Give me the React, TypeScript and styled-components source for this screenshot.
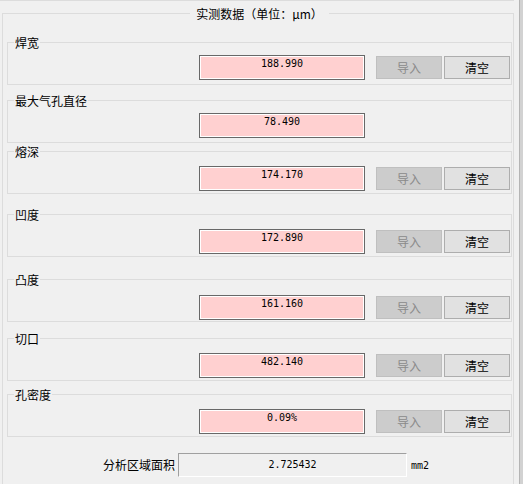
import React from "react";
import styled, { createGlobalStyle } from "styled-components";

//#region Styles
const GlobalStyle = createGlobalStyle`
  html, body {
    margin: 0;
    padding: 0;
    background: #f0f0f0;
  }
  body {
    font-family: "Noto Sans CJK SC", "Noto Sans", sans-serif;
    font-size: 12px;
    color: #000;
  }
`;

const Window = styled.div`
  width: 523px;
  height: 484px;
  overflow: hidden;
  display: flex;
  justify-content: space-between;
  background: #f0f0f0;
`;

const Panel = styled.div`
  width: 514px;
  box-sizing: border-box;
  border-top: 1px solid #dcdcdc;
  padding: 6px 0 0 2px;
`;

const ScrollEdge = styled.div`
  width: 3px;
  border-left: 1px solid #b4b4b4;
  background: #d2d2d2;
`;

const OuterGroup = styled.fieldset`
  margin: 0;
  min-width: 0;
  min-height: 520px;
  padding: 16px 1px 0 4px;
  border: 1px solid #dcdcdc;
`;

const OuterTitle = styled.legend`
  margin: 0 auto;
  padding: 0 6px;
  font-size: 12px;
  line-height: 13px;
`;

const Group = styled.fieldset<{ $gap: number }>`
  margin: ${(p) => p.$gap}px 0 0;
  min-width: 0;
  padding: 0;
  border: 1px solid #dcdcdc;
`;

const GroupTitle = styled.legend`
  margin-left: 6px;
  padding: 0 1px;
  font-size: 12px;
  line-height: 13px;
`;

const Row = styled.div<{ $offset: number }>`
  height: 35px;
  box-sizing: border-box;
  padding: ${(p) => p.$offset - 7}px 0 0 191px;
  display: flex;
  align-items: flex-start;
`;

const Controls = styled.div`
  height: 25px;
  display: flex;
  align-items: center;
  gap: 2px;
`;

const ValueBox = styled.div`
  width: 166px;
  height: 25px;
  box-sizing: border-box;
  margin-right: 11px;
  padding-top: 1px;
  border: 1px solid #686868;
  box-shadow: inset 0 0 0 1px #fff;
  background: #ffd0d0;
  font-family: "DejaVu Sans Mono", "Liberation Mono", monospace;
  font-size: 10px;
  line-height: 13px;
  text-align: center;
`;

const Button = styled.button`
  width: 66px;
  height: 23px;
  margin: 0;
  padding: 0;
  box-sizing: border-box;
  border: 1px solid #adadad;
  background: #e1e1e1;
  color: #000;
  font-family: "Noto Sans CJK SC", sans-serif;
  font-size: 12px;
  line-height: 21px;

  &:disabled {
    border-color: #bfbfbf;
    background: #cccccc;
    color: #8a8a8a;
  }
`;

const AreaRow = styled.div`
  margin-top: 16px;
  padding-left: 96px;
  display: flex;
  align-items: center;
  gap: 3px;
`;

const AreaLabel = styled.span`
  font-size: 12px;
  line-height: 14px;
`;

const AreaBox = styled.div`
  width: 229px;
  height: 24px;
  box-sizing: border-box;
  border: 1px solid;
  border-color: #a0a0a0 #fff #fff #a0a0a0;
  background: #f0f0f0;
  font-family: "DejaVu Sans Mono", "Liberation Mono", monospace;
  font-size: 10px;
  line-height: 22px;
  text-align: center;
`;

const Unit = styled.span`
  margin-left: 1px;
  font-family: "DejaVu Sans Mono", "Liberation Mono", monospace;
  font-size: 10px;
`;
//#endregion

type Measure = {
  label: string;
  value: string;
  offset: number;
  gap: number;
  importable: boolean;
};

const MEASURES: Measure[] = [
  { label: "焊宽", value: "188.990", offset: 13, gap: 0, importable: true },
  { label: "最大气孔直径", value: "78.490", offset: 13, gap: 9, importable: false },
  { label: "熔深", value: "174.170", offset: 15, gap: 2, importable: true },
  { label: "凹度", value: "172.890", offset: 15, gap: 14, importable: true },
  { label: "凸度", value: "161.160", offset: 16, gap: 16, importable: true },
  { label: "切口", value: "482.140", offset: 15, gap: 10, importable: true },
  { label: "孔密度", value: "0.09%", offset: 15, gap: 7, importable: true },
];

const MeasureGroup = ({ item }: { item: Measure }) => (
  <Group $gap={item.gap}>
    <GroupTitle>{item.label}</GroupTitle>
    <Row $offset={item.offset}>
      <ValueBox>{item.value}</ValueBox>
      {item.importable && (
        <Controls>
          <Button type="button" disabled>
            导入
          </Button>
          <Button type="button">清空</Button>
        </Controls>
      )}
    </Row>
  </Group>
);

export default function App() {
  return (
    <Window>
      <GlobalStyle />
      <Panel>
        <OuterGroup>
          <OuterTitle>实测数据（单位：μm）</OuterTitle>
          {MEASURES.map((m) => (
            <MeasureGroup key={m.label} item={m} />
          ))}
          <AreaRow>
            <AreaLabel>分析区域面积</AreaLabel>
            <AreaBox>2.725432</AreaBox>
            <Unit>mm2</Unit>
          </AreaRow>
        </OuterGroup>
      </Panel>
      <ScrollEdge />
    </Window>
  );
}
